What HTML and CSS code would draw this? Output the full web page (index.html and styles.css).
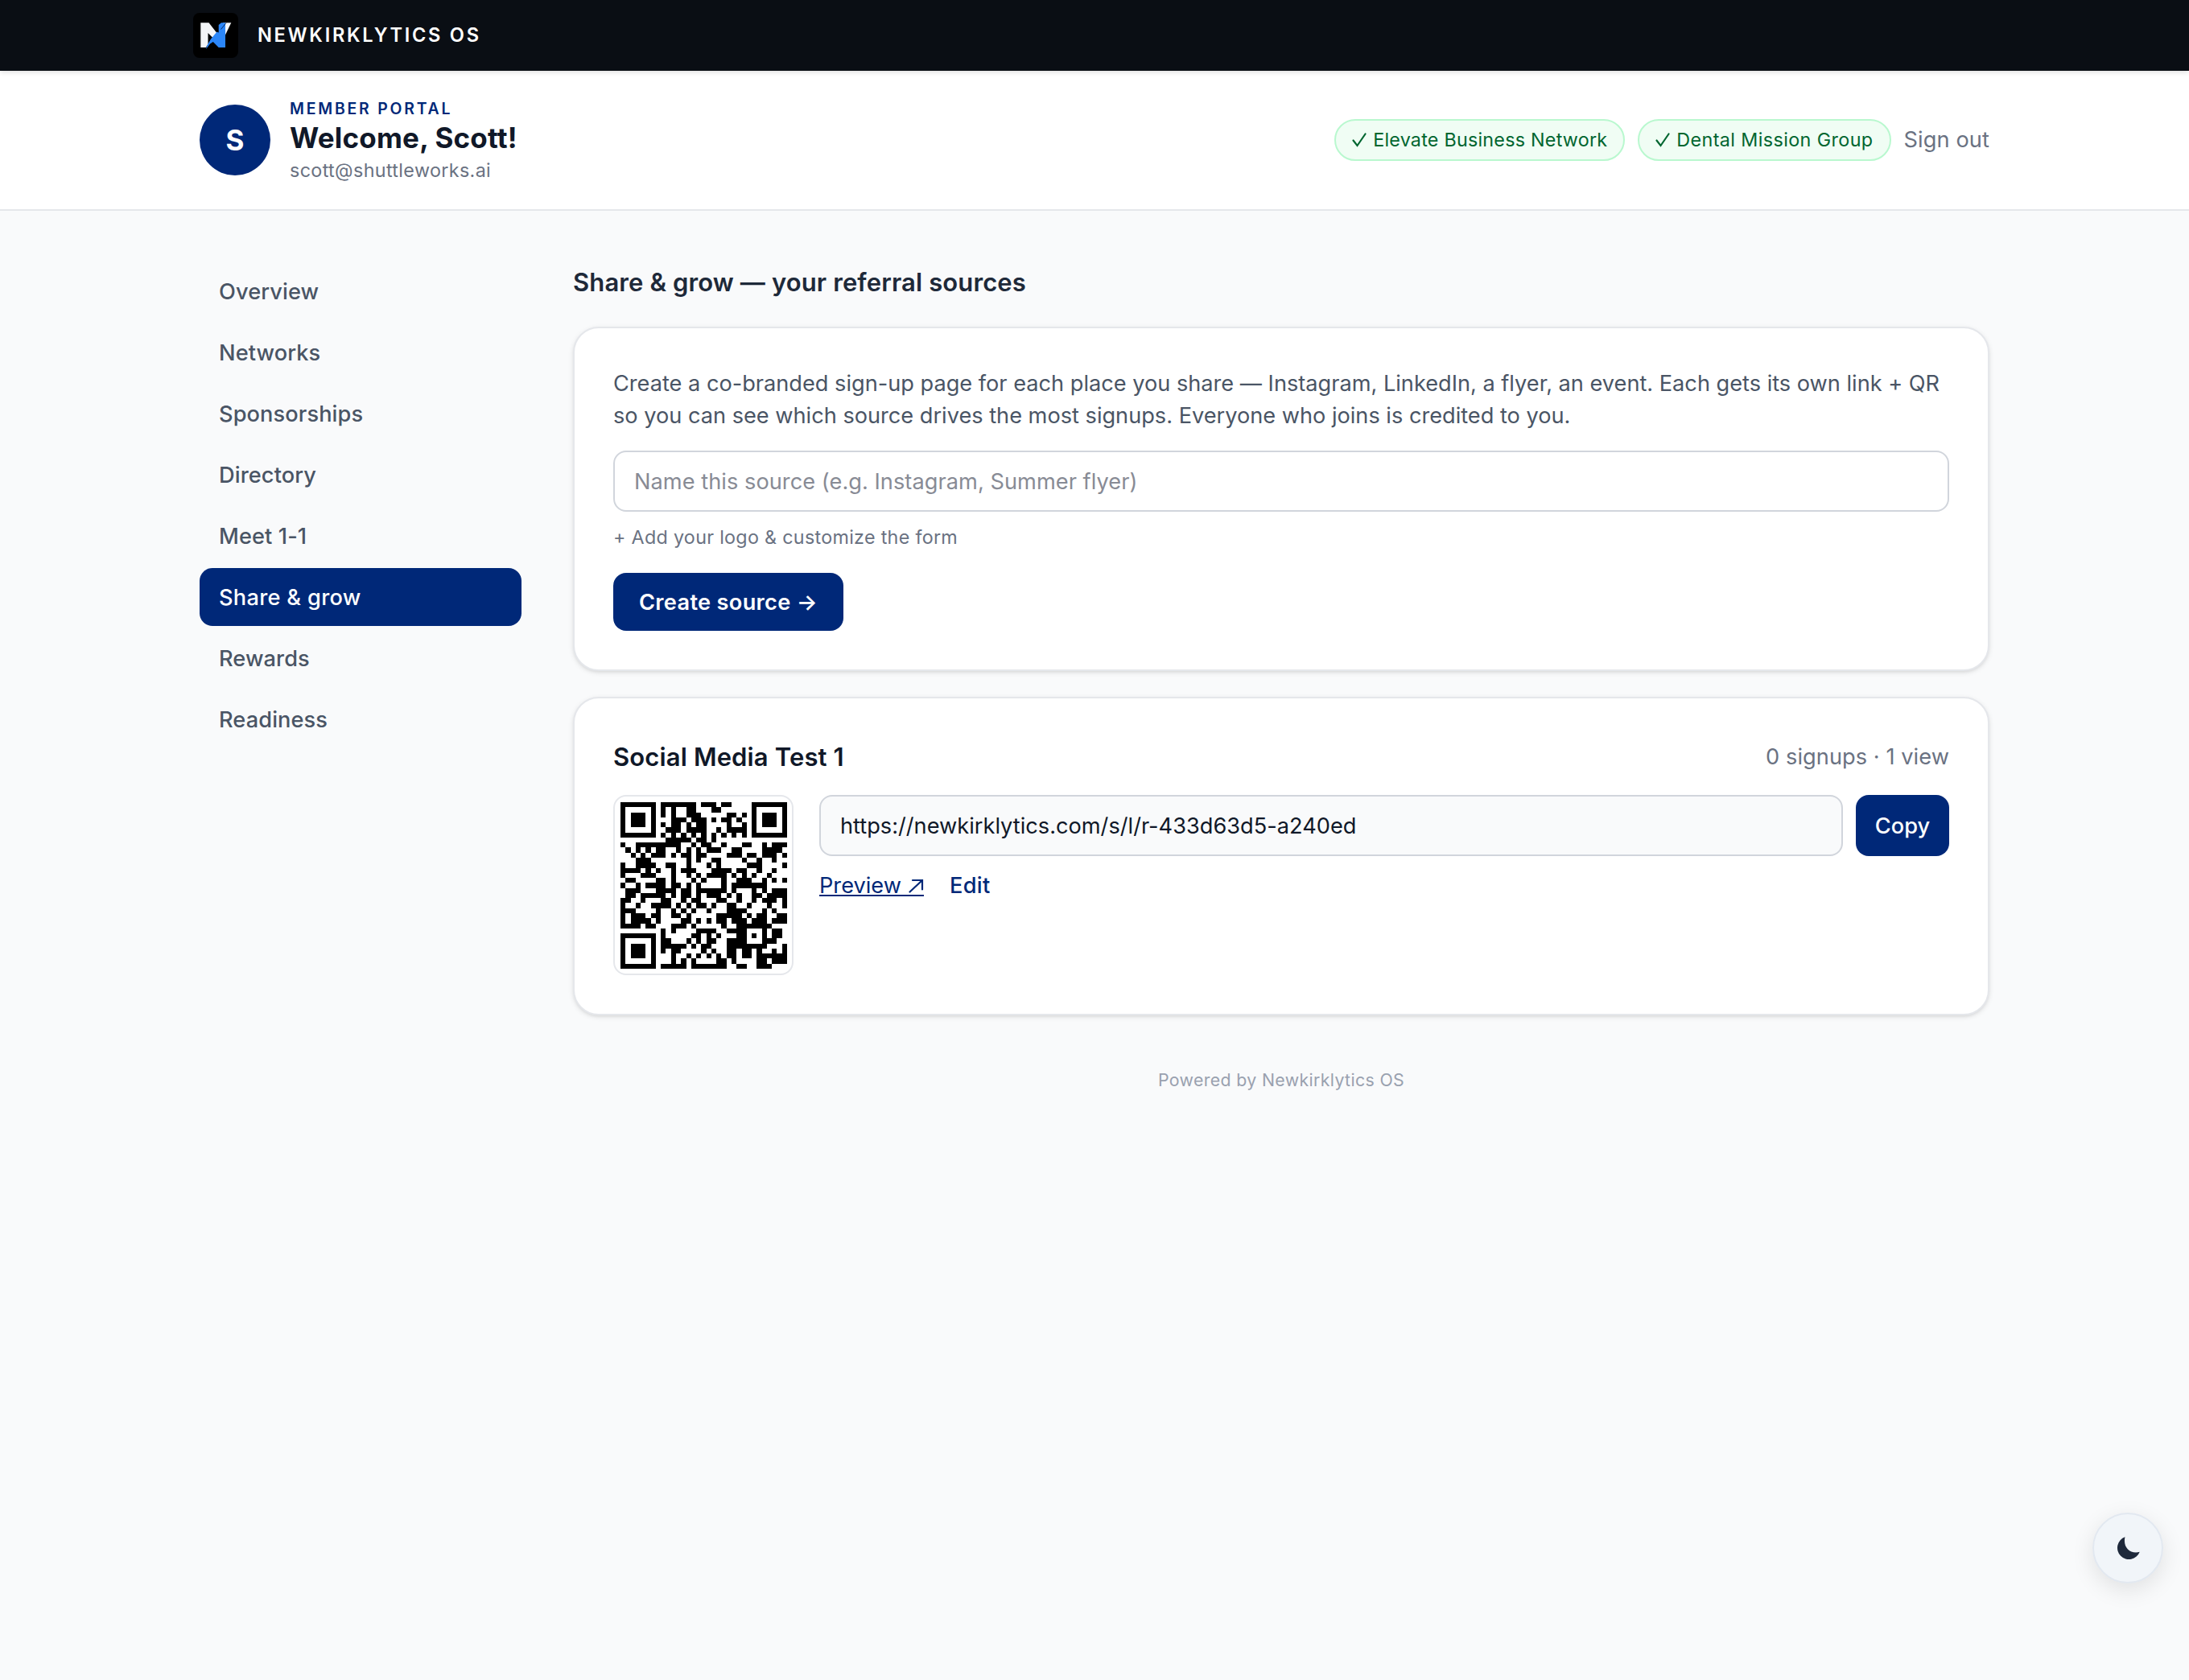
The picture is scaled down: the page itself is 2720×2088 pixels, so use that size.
FILE: index.html
```html
<!DOCTYPE html>
<html lang="en">
<head>
<meta charset="utf-8">
<title>Member Portal</title>
<link rel="stylesheet" href="styles.css">
</head>
<body>
<div class="topbar">
  <svg class="logo" viewBox="0 0 56 56" aria-hidden="true">
    <rect width="56" height="56" rx="8" fill="#000"/>
    <path d="M9.300 12.200H19.500L31 27L25.500 32L18.500 25V39L15.800 43H9.300Z" fill="#f4f5f7"/>
    <path d="M37 12.200H47.300L39.700 28Z" fill="#f4f5f7"/>
    <path d="M31.700 15L35 12.200H40V43H31.700L24.800 36L21 38.500L16 45L17 41L22 32.500L29.500 23.500L31.700 24.500Z" fill="#2b86f8"/>
    <path d="M41 12.500L34.500 20.500" stroke="#0b2a5c" stroke-width="1"/>
  </svg>
  <span class="brand">NEWKIRKLYTICS OS</span>
</div>
<header class="header">
  <div class="avatar">S</div>
  <div class="who">
    <div class="eyebrow">MEMBER PORTAL</div>
    <h1 class="welcome">Welcome, Scott!</h1>
    <div class="email">scott@shuttleworks.ai</div>
  </div>
  <div class="header-end">
    <span class="pill"><svg class="check" viewBox="0 0 18 18"><path d="M1.500 9.500L6.500 16L16.500 1.500"/></svg>Elevate Business Network</span>
    <span class="pill pill-wide"><svg class="check" viewBox="0 0 18 18"><path d="M1.500 9.500L6.500 16L16.500 1.500"/></svg>Dental Mission Group</span>
    <a class="signout">Sign out</a>
  </div>
</header>
<div class="layout">
  <nav class="nav">
    <a class="nav-item">Overview</a>
    <a class="nav-item">Networks</a>
    <a class="nav-item">Sponsorships</a>
    <a class="nav-item">Directory</a>
    <a class="nav-item">Meet 1-1</a>
    <a class="nav-item active">Share &amp; grow</a>
    <a class="nav-item">Rewards</a>
    <a class="nav-item">Readiness</a>
  </nav>
  <main class="main">
    <h2 class="title">Share &amp; grow — your referral sources</h2>
    <section class="card">
      <p class="intro">Create a co-branded sign-up page for each place you share — Instagram, LinkedIn, a flyer, an event. Each gets its own link + QR<br>so you can see which source drives the most signups. Everyone who joins is credited to you.</p>
      <div class="field placeholder">Name this source (e.g. Instagram, Summer flyer)</div>
      <a class="customize">+ Add your logo &amp; customize the form</a>
      <button class="btn create">Create source →</button>
    </section>
    <section class="card">
      <div class="source-head">
        <h3 class="source-name">Social Media Test 1</h3>
        <span class="stats">0 signups · 1 view</span>
      </div>
      <div class="source-body">
        <div class="qr"><svg id="qr" viewBox="0 0 33 33" shape-rendering="crispEdges"><path fill="#000"/></svg></div>
        <div class="source-link">
          <div class="link-row">
            <div class="field url">https://newkirklytics.com/s/l/r-433d63d5-a240ed</div>
            <button class="btn copy">Copy</button>
          </div>
          <div class="actions">
            <a class="preview">Preview<svg class="out" viewBox="0 0 19 18"><path d="M1.500 16.500L17 2M5 2H17V13.500"/></svg></a>
            <a class="edit">Edit</a>
          </div>
        </div>
      </div>
    </section>
    <footer class="footer">Powered by Newkirklytics OS</footer>
  </main>
</div>
<button class="theme" aria-label="Theme">
  <svg viewBox="0 0 29 29"><path d="M10.500 .3A14.300 14.300 0 1 0 28.700 18.800C17 22 7.500 13 10.500 .3Z" fill="#1e293b"/></svg>
</button>
<script src="qr.js"></script>
</body>
</html>
```
FILE: styles.css
```css
* { box-sizing: border-box; margin: 0; padding: 0; }
body { width: 2720px; min-height: 2088px; background: #f9fafb; color: #101828; font-family: Inter, sans-serif; font-size: 27.2px; line-height: 40px; }
button { border: 0; font: inherit; }
.topbar { height: 88px; padding: 0 240px; display: flex; align-items: center; gap: 24px; background: #0a0e14; box-shadow: 0 2px 6px rgba(0,0,0,.12); position: relative; }
.logo { width: 56px; height: 56px; }
.brand { color: #fff; font-size: 23.6px; font-weight: 600; letter-spacing: 2.7px; }
.header { height: 174px; padding: 0 248px; display: flex; align-items: center; gap: 24px; background: #fff; border-bottom: 2px solid #e5e7eb; }
.avatar { width: 88px; height: 88px; border-radius: 50%; background: #002878; color: #fff; font-size: 35px; font-weight: 700; display: flex; align-items: center; justify-content: center; }
.who { margin-top: 3px; white-space: nowrap; }
.eyebrow { color: #002878; font-size: 19.4px; line-height: 25px; font-weight: 600; letter-spacing: 2.8px; }
.welcome { font-size: 35px; line-height: 47px; font-weight: 700; letter-spacing: .2px; }
.email { color: #6a7282; font-size: 23.3px; line-height: 33px; letter-spacing: .37px; }
.header-end { margin-left: auto; display: flex; align-items: center; gap: 16px; white-space: nowrap; }
.pill { height: 52px; padding: 0 20px; border: 2px solid #b9f8cf; border-radius: 26px; background: #f0fdf4; color: #016630; font-size: 23.3px; letter-spacing: .24px; display: flex; align-items: center; }
.pill-wide { letter-spacing: .4px; }
.check { width: 18px; height: 18px; margin-right: 8px; fill: none; stroke: #016630; stroke-width: 2.2; stroke-linecap: round; }
.signout { color: #6a7282; letter-spacing: .1px; }
.layout { display: grid; grid-template-columns: 400px 1760px; gap: 64px; padding: 64px 248px; }
.nav { display: flex; flex-direction: column; gap: 4px; }
.nav-item { height: 72px; padding: 17px 24px 15px; border-radius: 16px; color: #4a5565; font-weight: 500; letter-spacing: .1px; }
.nav-item.active { background: #002878; color: #fff; letter-spacing: .3px; }
.title { font-size: 31px; line-height: 48px; font-weight: 600; color: #1e2939; margin-bottom: 32px; letter-spacing: .12px; padding-top: 1px; height: 48px; }
.card { border: 2px solid #e5e7eb; border-radius: 32px; background: #fff; padding: 48px; margin-bottom: 32px; box-shadow: 0 2px 6px rgba(0,0,0,.1), 0 2px 4px -2px rgba(0,0,0,.1); }
.intro { color: #4a5565; padding-top: 1px; margin-bottom: 23px; white-space: nowrap; letter-spacing: -.015px; }
.field { height: 76px; border: 2px solid #d1d5dc; border-radius: 16px; padding: 17px 24px 15px; white-space: nowrap; }
.placeholder { color: #888b95; letter-spacing: .04px; }
.customize { display: block; color: #6a7282; font-size: 23.3px; line-height: 32px; margin: 16px 0 28px; letter-spacing: .3px; }
.btn { background: #002878; color: #fff; border-radius: 16px; padding-top: 2px; display: flex; align-items: center; justify-content: center; }
.create { width: 286px; height: 72px; font-weight: 600; letter-spacing: .3px; }
.source-head { display: flex; justify-content: space-between; align-items: center; height: 48px; padding-top: 2px; margin-bottom: 24px; }
.source-name { font-size: 31px; font-weight: 600; letter-spacing: .14px; }
.stats { color: #6a7282; letter-spacing: .06px; }
.source-body { display: flex; gap: 32px; }
.qr { width: 224px; height: 224px; padding: 7px; border: 2px solid #e5e7eb; border-radius: 16px; }
.qr svg { display: block; width: 207px; height: 207px; }
.source-link { flex: 1; }
.link-row { display: flex; gap: 16px; }
.url { flex: 1; background: #f9fafb; }
.copy { width: 116px; height: 76px; font-weight: 500; }
.actions { display: flex; gap: 32px; margin-top: 17px; color: #002878; }
.preview { height: 33px; display: flex; align-items: flex-start; border-bottom: 2px solid #002878; }
.out { width: 19px; height: 18px; margin: 11px 0 0 9px; fill: none; stroke: #002878; stroke-width: 2.2; stroke-linecap: round; }
.edit { font-weight: 500; letter-spacing: .3px; }
.footer { text-align: center; color: #99a1af; font-size: 21.3px; letter-spacing: .36px; margin-top: 60px; }
.theme { position: fixed; right: 32px; bottom: 120px; width: 88px; height: 88px; border-radius: 50%; background: #f1f5f9; border: 2px solid #e2e8f0; box-shadow: 0 8px 28px rgba(0,0,0,.1); display: flex; align-items: center; justify-content: center; }
.theme svg { width: 29px; height: 29px; }
```
FILE: qr.js
```js
// Version 4-M QR encoder (two blocks of 32 data + 18 error-correction bytes).
(function () {
  var text = 'https://newkirklytics.com/s/l/r-433d63d5-a240ed';
  var N = 33, MASK = 6, bits = [], i, j;
  function push(v, n) { for (var k = n - 1; k >= 0; k--) bits.push((v >> k) & 1); }
  push(4, 4); push(text.length, 8);
  for (i = 0; i < text.length; i++) push(text.charCodeAt(i), 8);
  push(0, 4);
  var data = [];
  for (i = 0; i < bits.length; i += 8) data.push(parseInt(bits.slice(i, i + 8).join(''), 2));
  for (i = 0; data.length < 64; i++) data.push(i % 2 ? 17 : 236);
  function mul(a, b) { var z = 0; for (var k = 7; k >= 0; k--) { z = (z << 1) ^ ((z >>> 7) * 0x11d); z ^= ((b >>> k) & 1) * a; } return z; }
  var gen = []; for (i = 0; i < 17; i++) gen.push(0); gen.push(1);
  var root = 1;
  for (i = 0; i < 18; i++) { for (j = 0; j < 18; j++) { gen[j] = mul(gen[j], root); if (j + 1 < 18) gen[j] ^= gen[j + 1]; } root = mul(root, 2); }
  function ecc(d) {
    var r = gen.map(function () { return 0; });
    d.forEach(function (b) { var f = b ^ r.shift(); r.push(0); gen.forEach(function (c, k) { r[k] ^= mul(c, f); }); });
    return r;
  }
  var a = data.slice(0, 32), b = data.slice(32), ea = ecc(a), eb = ecc(b), out = [];
  for (i = 0; i < 32; i++) out.push(a[i], b[i]);
  for (i = 0; i < 18; i++) out.push(ea[i], eb[i]);
  var m = [], fn = [];
  for (i = 0; i < N; i++) { m.push(new Array(N).fill(0)); fn.push(new Array(N).fill(0)); }
  function set(x, y, v) { if (x < 0 || y < 0 || x >= N || y >= N) return; m[y][x] = v ? 1 : 0; fn[y][x] = 1; }
  // Timing, finder and alignment patterns
  for (i = 0; i < N; i++) { set(6, i, i % 2 === 0); set(i, 6, i % 2 === 0); }
  [[3, 3], [N - 4, 3], [3, N - 4]].forEach(function (c) {
    for (var dy = -4; dy <= 4; dy++) for (var dx = -4; dx <= 4; dx++) { var d = Math.max(Math.abs(dx), Math.abs(dy)); set(c[0] + dx, c[1] + dy, d !== 2 && d !== 4); }
  });
  for (i = -2; i <= 2; i++) for (j = -2; j <= 2; j++) set(26 + i, 26 + j, Math.max(Math.abs(i), Math.abs(j)) !== 1);
  // Format information
  var rem = MASK; for (i = 0; i < 10; i++) rem = (rem << 1) ^ ((rem >>> 9) * 0x537);
  var f = ((MASK << 10) | rem) ^ 0x5412;
  function g(k) { return (f >>> k) & 1; }
  for (i = 0; i <= 5; i++) set(8, i, g(i));
  set(8, 7, g(6)); set(8, 8, g(7)); set(7, 8, g(8));
  for (i = 9; i < 15; i++) set(14 - i, 8, g(i));
  for (i = 0; i < 8; i++) set(N - 1 - i, 8, g(i));
  for (i = 8; i < 15; i++) set(8, N - 15 + i, g(i));
  set(8, N - 8, 1);
  // Codewords, placed in the zigzag order and masked
  var k = 0;
  for (var right = N - 1; right >= 1; right -= 2) {
    if (right === 6) right = 5;
    for (var v = 0; v < N; v++) for (j = 0; j < 2; j++) {
      var x = right - j, y = ((right + 1) & 2) === 0 ? N - 1 - v : v;
      if (!fn[y][x]) {
        var bit = k < 800 ? (out[k >> 3] >>> (7 - (k & 7))) & 1 : 0; k++;
        m[y][x] = bit ^ (((x * y) % 2 + (x * y) % 3) % 2 === 0 ? 1 : 0);
      }
    }
  }
  var d = '';
  for (i = 0; i < N; i++) for (j = 0; j < N; j++) if (m[i][j]) d += 'M' + j + ' ' + i + 'h1v1h-1z';
  document.querySelector('#qr path').setAttribute('d', d);
})();
```
